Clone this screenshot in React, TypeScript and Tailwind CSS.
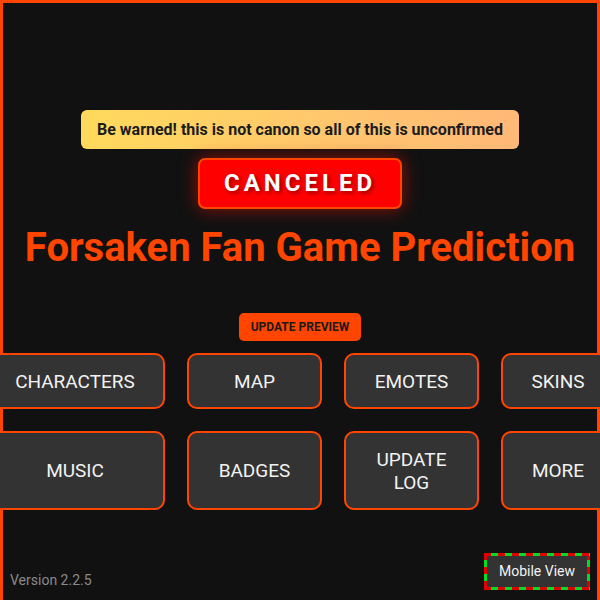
import React from 'react';

const menu = [
    { label: 'CHARACTERS' },
    { label: 'MAP' },
    { label: 'EMOTES' },
    { label: 'SKINS' },
    { label: 'MUSIC' },
    { label: 'BADGES' },
    { label: 'UPDATE\nLOG' },
    { label: 'MORE' },
];

export default function App() {
    return (
        <div className="h-screen overflow-hidden bg-[#111111] font-['Roboto',sans-serif]">
            <div className="relative flex h-full flex-col border-x-[3px] border-t-[3px] border-[#ff4500]">
                {/* Header */}
                <div className="flex flex-col items-center pt-[107px]">
                    <div className="rounded-[6px] bg-gradient-to-r from-[#ffda5c] to-[#ffb877] px-4 py-[10px] text-[16px] leading-[19px] font-bold text-[#1c1c1c]">
                        Be warned! this is not canon so all of this is unconfirmed
                    </div>

                    <div className="mt-[9px] rounded-[7px] border-2 border-[#ff4500] bg-[#ff0000] px-[24px] py-[9px] text-[24px] leading-[29px] font-bold tracking-[4px] text-white shadow-[0_0_18px_rgba(255,20,0,0.55)] [text-shadow:2px_2px_4px_rgba(0,0,0,0.45)]">
                        CANCELED
                    </div>

                    <h1 className="mt-[15px] text-[40px] leading-[47px] font-bold text-[#ff4500]">
                        Forsaken Fan Game Prediction
                    </h1>

                    <button className="mt-[42px] rounded-[5px] bg-[#ff4500] px-3 py-[7px] text-[12px] leading-[14px] font-bold text-[#1a1a1a]">
                        UPDATE PREVIEW
                    </button>
                </div>

                {/* Menu grid */}
                <div className="mt-[12px] grid grid-cols-[180px_135px_135px_114px] justify-center gap-[22px]">
                    {menu.map((item) => (
                        <button
                            key={item.label}
                            className="flex items-center justify-center whitespace-pre-line rounded-[10px] border-2 border-[#ff4500] bg-[#333333] py-[14.5px] text-center text-[19px] leading-[23px] text-[#f2f2f2]"
                        >
                            {item.label}
                        </button>
                    ))}
                </div>

                {/* Footer */}
                <div className="mt-auto flex items-end justify-between pb-[10px] pl-[7px] pr-[7px]">
                    <span className="text-[14px] leading-[20px] text-[#8a8a8a]">Version 2.2.5</span>
                    {/* red/green striped frame */}
                    <span className="block p-[3px] [background:repeating-linear-gradient(90deg,#e00000_0_7px,#00dd22_7px_14px)_top/100%_3px_no-repeat,repeating-linear-gradient(90deg,#e00000_0_7px,#00dd22_7px_14px)_bottom/100%_3px_no-repeat,repeating-linear-gradient(180deg,#e00000_0_7px,#00dd22_7px_14px)_left/3px_100%_no-repeat,repeating-linear-gradient(180deg,#e00000_0_7px,#00dd22_7px_14px)_right/3px_100%_no-repeat]">
                        <button className="block bg-[#333333] px-[12px] py-[6px] text-[14px] leading-[19px] text-[#f2f2f2]">
                            Mobile View
                        </button>
                    </span>
                </div>
            </div>
        </div>
    );
}
